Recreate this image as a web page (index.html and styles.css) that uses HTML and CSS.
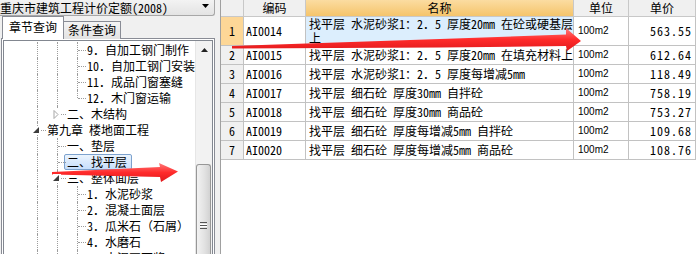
FILE: index.html
```html
<!DOCTYPE html>
<html lang="zh-CN">
<head>
    <meta charset="UTF-8">
    <title>定额查询</title>
    <link rel="stylesheet" href="styles.css">
</head>
<body>
<div class="app">
    <!-- 左侧：定额库 + 章节树 -->
    <div class="side">
        <div class="combo">
            <span class="combo-text">重庆市建筑工程计价定额(2008)</span>
            <span class="combo-btn">
                <svg width="7" height="4" viewBox="0 0 7 4"><path d="M0 0h7L3.5 4z" fill="#000"/></svg>
            </span>
        </div>

        <div class="tabs">
            <div class="tab active">章节查询</div>
            <div class="tab">条件查询</div>
        </div>

        <div class="tab-panel">
            <div class="tree">
                <div class="tree-body">
                    <div class="node"><i class="ind"></i><i class="ind line"></i><i class="ind line"></i><i class="ind tee"></i><span class="label">9．自加工钢门制作</span></div>
                    <div class="node"><i class="ind"></i><i class="ind line"></i><i class="ind line"></i><i class="ind tee"></i><span class="label">10．自加工钢门安装</span></div>
                    <div class="node"><i class="ind"></i><i class="ind line"></i><i class="ind line"></i><i class="ind tee"></i><span class="label">11．成品门窗塞缝</span></div>
                    <div class="node"><i class="ind"></i><i class="ind line"></i><i class="ind line"></i><i class="ind elbow"></i><span class="label">12．木门窗运输</span></div>
                    <div class="node"><i class="ind"></i><i class="ind line"></i><i class="ind elbow">
                        <svg class="exp" width="6" height="9" viewBox="0 0 6 9"><path d="M1 .5v8l4-4z" fill="#fff" stroke="#a6a6a6"/></svg>
                    </i><span class="label">二、木结构</span></div>
                    <div class="node"><i class="ind"></i><i class="ind tee">
                        <svg class="exp" width="6" height="6" viewBox="0 0 6 6"><path d="M6 0v6H0z" fill="#3c3c3c"/></svg>
                    </i><span class="label">第九章 楼地面工程</span></div>
                    <div class="node"><i class="ind"></i><i class="ind line"></i><i class="ind tee"></i><span class="label">一、垫层</span></div>
                    <div class="node"><i class="ind"></i><i class="ind line"></i><i class="ind tee"></i><span class="label selected">二、找平层</span></div>
                    <div class="node"><i class="ind"></i><i class="ind line"></i><i class="ind tee">
                        <svg class="exp" width="6" height="6" viewBox="0 0 6 6"><path d="M6 0v6H0z" fill="#3c3c3c"/></svg>
                    </i><span class="label">三、整体面层</span></div>
                    <div class="node"><i class="ind"></i><i class="ind line"></i><i class="ind line"></i><i class="ind tee"></i><span class="label">1．水泥砂浆</span></div>
                    <div class="node"><i class="ind"></i><i class="ind line"></i><i class="ind line"></i><i class="ind tee"></i><span class="label">2．混凝土面层</span></div>
                    <div class="node"><i class="ind"></i><i class="ind line"></i><i class="ind line"></i><i class="ind tee"></i><span class="label">3．瓜米石（石屑）</span></div>
                    <div class="node"><i class="ind"></i><i class="ind line"></i><i class="ind line"></i><i class="ind tee"></i><span class="label">4．水磨石</span></div>
                    <div class="node"><i class="ind"></i><i class="ind line"></i><i class="ind line"></i><i class="ind tee"></i><span class="label">5．水泥豆石浆</span></div>
                </div>
                <div class="vscroll">
                    <div class="vs-up">
                        <svg width="7" height="4" viewBox="0 0 7 4"><path d="M0 4h7L3.5 0z" fill="#222"/></svg>
                    </div>
                    <div class="vs-track"></div>
                    <div class="vs-thumb"><span class="grip"></span></div>
                </div>
            </div>
        </div>
    </div>

    <div class="splitter"></div>

    <!-- 右侧：定额子目列表 -->
    <div class="grid">
        <div class="grow head">
            <div class="gcell num"></div>
            <div class="gcell center">编码</div>
            <div class="gcell center sorted">名称</div>
            <div class="gcell center">单位</div>
            <div class="gcell center">单价</div>
        </div>
        <div class="grow tall">
            <div class="gcell num current">1</div>
            <div class="gcell">AI0014</div>
            <div class="gcell name focus"><span>找平层 水泥砂浆1：2．5 厚度20mm 在砼或硬基层<br>上</span></div>
            <div class="gcell unit">100m2</div>
            <div class="gcell price">563.55</div>
        </div>
        <div class="grow">
            <div class="gcell num">2</div>
            <div class="gcell">AI0015</div>
            <div class="gcell name">找平层 水泥砂浆1：2．5 厚度20mm 在填充材料上</div>
            <div class="gcell unit">100m2</div>
            <div class="gcell price">612.64</div>
        </div>
        <div class="grow">
            <div class="gcell num">3</div>
            <div class="gcell">AI0016</div>
            <div class="gcell name">找平层 水泥砂浆1：2．5 厚度每增减5mm</div>
            <div class="gcell unit">100m2</div>
            <div class="gcell price">118.49</div>
        </div>
        <div class="grow">
            <div class="gcell num">4</div>
            <div class="gcell">AI0017</div>
            <div class="gcell name">找平层 细石砼 厚度30mm 自拌砼</div>
            <div class="gcell unit">100m2</div>
            <div class="gcell price">758.19</div>
        </div>
        <div class="grow">
            <div class="gcell num">5</div>
            <div class="gcell">AI0018</div>
            <div class="gcell name">找平层 细石砼 厚度30mm 商品砼</div>
            <div class="gcell unit">100m2</div>
            <div class="gcell price">753.27</div>
        </div>
        <div class="grow">
            <div class="gcell num">6</div>
            <div class="gcell">AI0019</div>
            <div class="gcell name">找平层 细石砼 厚度每增减5mm 自拌砼</div>
            <div class="gcell unit">100m2</div>
            <div class="gcell price">109.68</div>
        </div>
        <div class="grow">
            <div class="gcell num">7</div>
            <div class="gcell">AI0020</div>
            <div class="gcell name">找平层 细石砼 厚度每增减5mm 商品砼</div>
            <div class="gcell unit">100m2</div>
            <div class="gcell price">108.76</div>
        </div>
    </div>

    <!-- 标注箭头 -->
    <svg class="marks" width="698" height="254" viewBox="0 0 698 254">
        <defs>
            <linearGradient id="red" x1="0" y1="0" x2="0" y2="1">
                <stop offset="0" stop-color="#ff7b7b"/>
                <stop offset=".5" stop-color="#ff2b2b"/>
                <stop offset="1" stop-color="#e0191b"/>
            </linearGradient>
        </defs>
        <polygon fill="url(#red)" points="232,46 440,39 566,34.5 566,28 581,41 567,51 566,46 440,47.5 232,48.5"/>
        <polygon fill="url(#red)" points="52,172 160,167 159,163 178,171.5 161,182 160,177 52,174.5"/>
    </svg>
</div>
</body>
</html>
```

FILE: styles.css
```css
/* ===== Base ===== */
body {
    margin: 0;
    background: #f0f0f0;
    font-family: "Noto Sans Mono CJK SC", "Noto Sans CJK SC", sans-serif;
    font-size: 12px;
    color: #000;
}

.app {
    position: relative;
    display: flex;
    width: 698px;
    height: 254px;
    overflow: hidden;
}

/* ===== Left side ===== */
.side {
    width: 215px;
    display: flex;
    flex-direction: column;
    flex: none;
}

.combo {
    display: flex;
    height: 16px;
    border-bottom: 1px solid #a7a7a7;
    border-right: 1px solid #a7a7a7;
    border-bottom-right-radius: 3px;
    background: linear-gradient(#f3f3f3, #e3e3e3);
    box-sizing: border-box;
}

.combo-text {
    flex: 1;
    line-height: 15px;
    white-space: nowrap;
}

.combo-btn {
    width: 17px;
    display: flex;
    align-items: center;
    justify-content: center;
    padding-bottom: 4px;
}

.tabs {
    display: flex;
    align-items: flex-end;
    height: 22px;
    margin-top: 1px;
    padding-left: 2px;
    position: relative;
    z-index: 1;
    margin-bottom: -1px;
}

.tab {
    height: 18px;
    line-height: 16px;
    padding: 0 4px;
    border: 1px solid #898c95;
    border-bottom: none;
    background: linear-gradient(#f4f4f4, #e2e2e2);
    box-sizing: border-box;
}

.tab.active {
    height: 23px;
    line-height: 20px;
    padding: 0 6px;
    background: #fff;
    margin-right: -1px;
    position: relative;
    z-index: 1;
}

.tab-panel {
    flex: 1;
    display: flex;
    margin-left: 1px;
    padding: 1px;
    border: 1px solid #898c95;
    border-bottom: none;
    background: #fff;
}

/* ===== Tree ===== */
.tree {
    flex: 1;
    display: flex;
    border: 1px solid #828790;
    border-bottom: none;
    background: #fff;
    min-width: 0;
}

.tree-body {
    flex: 1;
    min-width: 0;
    overflow: hidden;
    padding: 1px 0 0 3px;
}

.node {
    display: flex;
    align-items: center;
    height: 16px;
}

.ind {
    position: relative;
    flex: none;
    width: 20px;
    height: 16px;
    display: flex;
    align-items: center;
    justify-content: center;
}

.line::before,
.tee::before,
.elbow::before {
    content: '';
    position: absolute;
    left: 10px;
    top: 0;
    bottom: 0;
    border-left: 1px dotted #9c9c9c;
}

.elbow::before {
    bottom: 8px;
}

.tee::after,
.elbow::after {
    content: '';
    position: absolute;
    left: 11px;
    top: 8px;
    width: 8px;
    border-top: 1px dotted #9c9c9c;
}

.exp {
    position: relative;
    z-index: 1;
    background: #fff;
    padding: 1px 2px 1px 0;
}

.label {
    margin-left: -3px;
    padding: 0 4px 0 2px;
    height: 16px;
    line-height: 14px;
    border: 1px solid transparent;
    border-radius: 2px;
    white-space: nowrap;
    box-sizing: border-box;
}

.label.selected {
    border-color: #7da2ce;
    background: linear-gradient(#ebf4fd, #c6defc);
}

/* ===== Scrollbar ===== */
.vscroll {
    width: 17px;
    flex: none;
    display: flex;
    flex-direction: column;
    background: #f2f2f2;
    border-left: 1px solid #e6e6e6;
    box-sizing: border-box;
}

.vs-up {
    height: 17px;
    display: flex;
    align-items: center;
    justify-content: center;
}

.vs-track {
    height: 106px;
}

.vs-thumb {
    flex: 1;
    margin: 0 1px 0 0;
    border: 1px solid #979797;
    border-bottom: none;
    border-radius: 3px 3px 0 0;
    background: linear-gradient(90deg, #f2f2f2, #e1e1e1 60%, #d2d2d2);
    display: flex;
    justify-content: center;
}

.grip {
    width: 7px;
    height: 5px;
    margin-top: 57px;
    border-top: 1px solid #555;
    border-bottom: 1px solid #555;
    background: linear-gradient(#fff 0 1px, #555 1px 2px, #fff 2px) center / 100% 3px no-repeat;
}

.splitter {
    width: 5px;
    flex: none;
}

/* ===== Grid ===== */
.grid {
    flex: 1;
    border-left: 1px solid #a0a0a0;
    background: #fff;
}

.grow {
    display: grid;
    grid-template-columns: 23px 62px 268px 55px 67px;
    height: 19px;
}

.grow.head {
    height: 17px;
}

.grow.tall {
    height: 29px;
}

.gcell {
    display: flex;
    align-items: center;
    padding: 0 2px;
    line-height: 14px;
    border-right: 1px solid #c2c2c2;
    border-bottom: 1px solid #c2c2c2;
    white-space: nowrap;
    overflow: hidden;
    box-sizing: border-box;
}

.head .gcell {
    background: #f0f0f0;
    border-color: #c8c8c8;
}

.center {
    justify-content: center;
}

.head .sorted {
    background: linear-gradient(#fbdca1, #f5c46b);
}

.num {
    justify-content: center;
    background: #f0f0f0;
}

.num.current {
    background: #fdd797;
}

.name {
    padding-left: 3px;
}

.focus {
    background: #dceefd;
}

.unit {
    padding-left: 4px;
    font-family: "Liberation Sans", sans-serif;
    font-size: 10px;
}

.price {
    justify-content: flex-end;
    padding-right: 3px;
    letter-spacing: 1px;
}

/* ===== Marks ===== */
.marks {
    position: absolute;
    left: 0;
    top: 0;
    pointer-events: none;
}
```
